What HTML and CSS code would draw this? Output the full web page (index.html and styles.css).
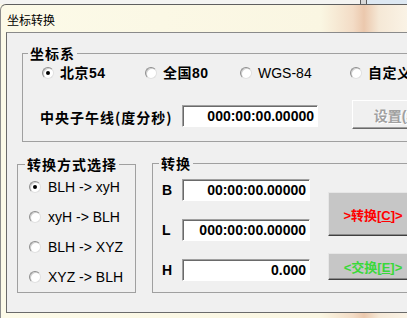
FILE: index.html
```html
<!DOCTYPE html>
<html lang="zh-CN">
<head>
    <meta charset="UTF-8">
    <title>坐标转换</title>
    <link rel="stylesheet" href="styles.css">
</head>
<body>

    <!-- strip of the window behind -->
    <div class="top-strip"></div>

    <div class="window">
        <div class="title">坐标转换</div>

        <div class="client">

            <!-- coordinate system -->
            <fieldset class="group g-coord">
                <legend>坐标系</legend>
                <div class="radio-row">
                    <label class="radio cjk"><span class="dot on"></span>北京54</label>
                    <label class="radio cjk"><span class="dot"></span>全国80</label>
                    <label class="radio"><span class="dot"></span>WGS-84</label>
                    <label class="radio cjk"><span class="dot"></span>自定义</label>
                </div>
                <div class="mer-row">
                    <span class="mer-label">中央子午线(度分秒)</span>
                    <div class="field mer">000:00:00.00000</div>
                    <button class="btn btn-set" disabled>设置(<u>S</u>)</button>
                </div>
            </fieldset>

            <div class="lower">
                <!-- conversion mode -->
                <fieldset class="group g-mode">
                    <legend>转换方式选择</legend>
                    <div class="mode-list">
                        <label class="mode"><span class="dot on"></span>BLH -&gt; xyH</label>
                        <label class="mode"><span class="dot"></span>xyH -&gt; BLH</label>
                        <label class="mode"><span class="dot"></span>BLH -&gt; XYZ</label>
                        <label class="mode"><span class="dot"></span>XYZ -&gt; BLH</label>
                    </div>
                </fieldset>

                <!-- values -->
                <fieldset class="group g-conv">
                    <legend>转换</legend>
                    <div class="conv-body">
                        <div class="conv-fields">
                            <div class="conv-row"><span class="axis">B</span><div class="field">00:00:00.00000</div></div>
                            <div class="conv-row"><span class="axis">L</span><div class="field">000:00:00.00000</div></div>
                            <div class="conv-row"><span class="axis">H</span><div class="field">0.000</div></div>
                        </div>
                        <div class="conv-buttons">
                            <button class="btn btn-go">&gt;转换[<u>C</u>]&gt;</button>
                            <button class="btn btn-swap">&lt;交换[<u>E</u>]&gt;</button>
                        </div>
                    </div>
                </fieldset>
            </div>

        </div>
    </div>

</body>
</html>
```

FILE: styles.css
```css
* {
    box-sizing: border-box;
}

body {
    margin: 0;
    width: 407px;
    height: 318px;
    overflow: hidden;
    background: #fbf8e6;
    font-family: 'Liberation Sans', 'Noto Sans CJK SC', sans-serif;
    font-size: 14px;
    color: #000;
}

.top-strip {
    height: 4px;
    background: linear-gradient(to right, #f4f4f2 0, #f4f4f2 360px, #5a5a5a 360px, #5a5a5a 361px,
        #d8d8d8 361px, #d8d8d8 366px, #5a5a5a 366px, #5a5a5a 367px, #dde8f2 367px);
}

/* Window */
.window {
    height: 314px;
    border-top: 1px solid #5f5f5f;
    border-left: 1px solid #8c8c8c;
    border-top-left-radius: 6px;
    background: linear-gradient(to right, #fcfae8 0, #faf6e2 320px, #f3dcc6 352px, #ebc8ad 363px,
        #f5e8d6 378px, #faf3e6 407px);
}

.title {
    height: 27px;
    padding: 7px 0 0 6px;
    font-family: 'Noto Sans CJK SC', sans-serif;
    font-size: 12px;
    line-height: 16px;
}

.client {
    margin-left: 5px;
    height: 281px;
    padding-top: 11px;
    background: #f0f0f0;
    border-top: 1px solid #8a8a8a;
    border-left: 1px solid #6a6a6a;
    border-bottom: 1px solid #6a6a6a;
}

/* Group boxes */
.group {
    margin: 0;
    padding: 0;
    min-width: 0;
    flex: none;
    border: 1px solid #a0a0a0;
}

.group legend {
    margin-left: 5px;
    padding: 0 2px;
    font-family: 'Noto Sans CJK SC', sans-serif;
    font-weight: bold;
    line-height: 18px;
    letter-spacing: 1px;
    white-space: nowrap;
}

.g-coord {
    margin-left: 15px;
    width: 420px;
    padding-bottom: 12px;
}

.radio-row {
    display: grid;
    grid-template-columns: 103px 95px 110px max-content;
    height: 22px;
    align-items: center;
    padding-left: 19px;
}

.radio {
    display: flex;
    align-items: center;
    gap: 6px;
    line-height: 16px;
    white-space: nowrap;
}

.radio.cjk {
    font-weight: bold;
    letter-spacing: 0.5px;
}

.dot {
    position: relative;
    flex: none;
    width: 12px;
    height: 12px;
    border-radius: 50%;
    background: #fff;
    border: 1px solid;
    border-color: #8e8e8e #e0e0e0 #e0e0e0 #8e8e8e;
    box-shadow: inset 1px 1px 0 #cfcfcf;
}

.dot.on::after {
    content: '';
    position: absolute;
    left: 3px;
    top: 3px;
    width: 4px;
    height: 4px;
    border-radius: 50%;
    background: #000;
}

.mer-row {
    display: flex;
    align-items: flex-start;
    height: 29px;
    margin-top: 16px;
    padding-left: 17px;
}

.mer-label {
    flex: none;
    width: 142px;
    margin-top: 9px;
    line-height: 16px;
    font-family: 'Noto Sans CJK SC', sans-serif;
    font-weight: bold;
    letter-spacing: 1px;
    white-space: nowrap;
}

.field {
    flex: none;
    width: 128px;
    height: 22px;
    padding-right: 3px;
    background: #fff;
    border: 1px solid;
    border-color: #a0a0a0 #fff #fff #a0a0a0;
    box-shadow: inset 1px 1px 0 #6a6a6a;
    text-align: right;
    font-weight: bold;
    line-height: 20px;
    white-space: nowrap;
}

.field.mer {
    width: 136px;
    margin-top: 5px;
}

/* Buttons */
.btn {
    display: block;
    flex: none;
    margin: 0;
    padding: 0;
    width: 90px;
    font-family: 'Liberation Sans', 'Noto Sans CJK SC', sans-serif;
    font-size: 14px;
    font-weight: bold;
    white-space: nowrap;
    border: 1px solid;
    cursor: pointer;
}

.btn-set {
    margin-left: 34px;
    height: 29px;
    background: #f0f0f0;
    border-color: #fff #696969 #696969 #fff;
    box-shadow: inset -1px -1px 0 #a0a0a0;
    color: #a0a0a0;
    text-shadow: 1px 1px 0 #fff;
}

.lower {
    display: flex;
    align-items: flex-start;
    margin-top: 13px;
}

.g-mode {
    margin-left: 10px;
    width: 119px;
}

.g-mode legend {
    margin-left: 7px;
}

.mode-list {
    margin-top: -1px;
    padding-left: 11px;
}

.mode {
    display: flex;
    align-items: center;
    gap: 7px;
    height: 30px;
    white-space: nowrap;
}

.g-conv {
    margin-left: 16px;
    margin-top: -1px;
    width: 300px;
}

.g-conv legend {
    margin-left: 6px;
}

.conv-body {
    display: flex;
    padding: 7px 0 11px 9px;
}

.conv-fields {
    flex: none;
    display: flex;
    flex-direction: column;
    gap: 18px;
}

.conv-row {
    display: flex;
    align-items: center;
    height: 22px;
}

.axis {
    flex: none;
    width: 20px;
    font-weight: bold;
}

.conv-buttons {
    flex: none;
    margin-left: 18px;
    padding-top: 13px;
}

.btn-go,
.btn-swap {
    font-size: 13px;
    background: #c6c6c6;
    border-color: #e6e6e6 #404040 #404040 #e6e6e6;
    box-shadow: inset -1px -1px 0 #8a8a8a;
}

.btn-go {
    height: 44px;
    color: #f00;
}

.btn-swap {
    height: 27px;
    margin-top: 17px;
    color: #3ad83a;
}
```
